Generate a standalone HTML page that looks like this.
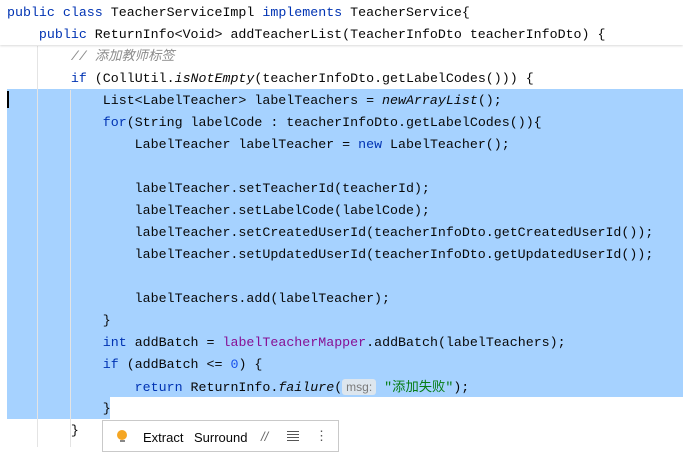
<!DOCTYPE html><html><head><style>
body{margin:0;width:683px;height:447px;overflow:hidden;background:#fff;position:relative;font-family:"Liberation Mono","Noto Sans CJK SC",monospace;font-size:13.3px;color:#080808}
.l{position:absolute;left:7px;height:22px;line-height:22px;white-space:pre}
.k{color:#0033b3}.p{color:#871094}.c{color:#8c8c8c;font-style:italic}.s{color:#067d17}.n{color:#1750eb}.i{font-style:italic}
.sel{position:absolute;background:#a6d2ff}
.g{position:absolute;width:1px;background:#e4e4e4}
</style></head><body>
<div class="sel" style="left:7px;top:89px;width:676px;height:308px"></div>
<div class="sel" style="left:7px;top:397px;width:103px;height:22px"></div>
<div class="g" style="left:37px;top:46px;height:401px"></div>
<div class="g" style="left:70px;top:90px;height:357px"></div>
<div style="position:absolute;left:0;top:0;width:683px;height:45px;background:#fff;box-shadow:0 1px 2px rgba(0,0,0,.15)"></div>
<div class="l" style="top:2px"><span class="k">public class</span> TeacherServiceImpl <span class="k">implements</span> TeacherService{</div>
<div class="l" style="top:24px">    <span class="k">public</span> ReturnInfo&lt;Void&gt; addTeacherList(TeacherInfoDto teacherInfoDto) {</div>
<div class="l" style="top:46px">        <span class="c">// 添加教师标签</span></div>
<div class="l" style="top:68px">        <span class="k">if</span> (CollUtil.<span class="i">isNotEmpty</span>(teacherInfoDto.getLabelCodes())) {</div>
<div class="l" style="top:90px">            List&lt;LabelTeacher&gt; labelTeachers = <span class="i">newArrayList</span>();</div>
<div class="l" style="top:112px">            <span class="k">for</span>(String labelCode : teacherInfoDto.getLabelCodes()){</div>
<div class="l" style="top:134px">                LabelTeacher labelTeacher = <span class="k">new</span> LabelTeacher();</div>
<div class="l" style="top:178px">                labelTeacher.setTeacherId(teacherId);</div>
<div class="l" style="top:200px">                labelTeacher.setLabelCode(labelCode);</div>
<div class="l" style="top:222px">                labelTeacher.setCreatedUserId(teacherInfoDto.getCreatedUserId());</div>
<div class="l" style="top:244px">                labelTeacher.setUpdatedUserId(teacherInfoDto.getUpdatedUserId());</div>
<div class="l" style="top:288px">                labelTeachers.add(labelTeacher);</div>
<div class="l" style="top:310px">            }</div>
<div class="l" style="top:332px">            <span class="k">int</span> addBatch = <span class="p">labelTeacherMapper</span>.addBatch(labelTeachers);</div>
<div class="l" style="top:354px">            <span class="k">if</span> (addBatch &lt;= <span class="n">0</span>) {</div>
<div class="l" style="top:376px">                <span class="k">return</span> ReturnInfo.<span class="i">failure</span>(<span style="background:#dde6ee;color:#7a7a7a;font-family:'Liberation Sans',sans-serif;font-size:12px;padding:1px 4px;border-radius:3px">msg:</span> <span class="s">"添加失败"</span>);</div>
<div class="l" style="top:398px">            }</div>
<div class="l" style="top:420px">        }</div>
<div style="position:absolute;left:7px;top:91px;width:2px;height:17px;background:#000"></div>
<div style="position:absolute;left:102px;top:420px;width:235px;height:30px;background:#fff;border:1px solid #c9c9c9;font-family:'Liberation Sans',sans-serif;font-size:13px">
<span style="position:absolute;left:14px;top:9px;width:10px;height:10px;border-radius:50%;background:#f5a623"></span>
<span style="position:absolute;left:17px;top:19px;width:5px;height:2px;background:#888"></span>
<span style="position:absolute;left:40px;top:9px">Extract</span>
<span style="position:absolute;left:91px;top:9px">Surround</span>
<span style="position:absolute;left:158px;top:8px;color:#666;font-style:italic">//</span>
<span style="position:absolute;left:184px;top:13px;width:12px;height:1px;background:#555;box-shadow:0 3px 0 #555,0 6px 0 #555,0 -3px 0 #555"></span>
<span style="position:absolute;left:212px;top:7px;color:#555">⋮</span>
</div>
</body></html>
